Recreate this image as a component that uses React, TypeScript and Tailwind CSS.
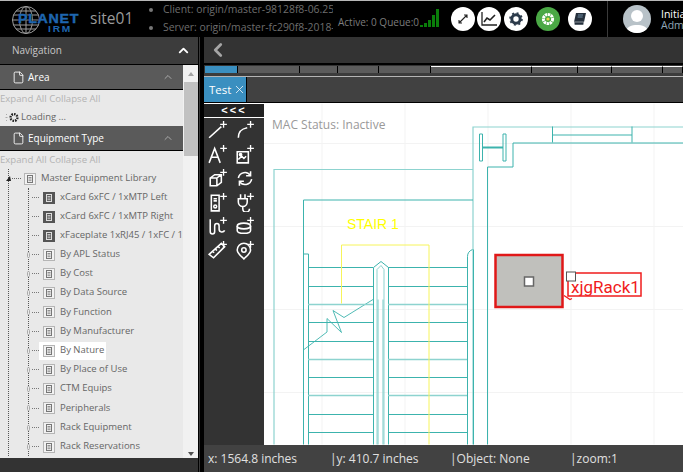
import React from "react";
import { ChevronUp, ChevronLeft, X, File } from "lucide-react";

const font = { fontFamily: '"Open Sans", sans-serif' };

function DevIcon({ dark }: { dark?: boolean }) {
  return (
    <svg width="12" height="12" viewBox="0 0 12 12" className="shrink-0">
      <rect x="0.5" y="0.5" width="11" height="11" fill={dark ? "#555" : "#f2f2f2"} stroke={dark ? "#555" : "#b5b5b5"} />
      <rect x="3.5" y="2.5" width="5" height="7" fill="none" stroke={dark ? "#ddd" : "#777"} />
      <path d="M4.5 4.5h3M4.5 6h3M4.5 7.7h3" stroke={dark ? "#ddd" : "#777"} strokeWidth="0.8" />
    </svg>
  );
}

const kids: { t: string; dark?: boolean; sel?: boolean; h?: string }[] = [
  { t: "xCard 6xFC / 1xMTP Left", dark: true },
  { t: "xCard 6xFC / 1xMTP Right", dark: true },
  { t: "xFaceplate 1xRJ45 / 1xFC / 1xMTP", dark: true },
  { t: "By APL Status" },
  { t: "By Cost" },
  { t: "By Data Source" },
  { t: "By Function", h: "h-[20px]" },
  { t: "By Manufacturer" },
  { t: "By Nature", sel: true },
  { t: "By Place of Use" },
  { t: "CTM Equips" },
  { t: "Peripherals", h: "h-[20px]" },
  { t: "Rack Equipment" },
  { t: "Rack Reservations" },
];

function PanelHead({ label }: { label: string }) {
  return (
    <div className="h-[25px] shrink-0 bg-[#5a5a5a] border-b border-black flex items-center pl-[12px] pr-[9px] text-white text-[10px]">
      <File size={13} strokeWidth={1.6} className="text-white mr-[2px] shrink-0" />
      <span className="ml-[1px]">{label}</span>
      <ChevronUp size={12} className="ml-auto text-[#aaa]" />
    </div>
  );
}

function ExpandLine() {
  return <div className="h-[18px] text-[9.6px] leading-[18px] text-[#b3b3b3] whitespace-nowrap">Expand All Collapse All</div>;
}

function Sidebar() {
  return (
    <div className="w-[198px] shrink-0 flex flex-col bg-[#333]">
      <div className="h-[28px] shrink-0 bg-[#3c3c3c] border-b border-black flex items-center pl-[12px] pr-[7px] text-[#c8c8c8] text-[10px]">
        Navigation
        <ChevronUp size={15} strokeWidth={3} className="ml-auto text-white" />
      </div>
      <div className="h-[393px] flex bg-[#f1f1f1]">
        <div className="w-[183px] bg-[#e9e9e9] overflow-hidden">
          <PanelHead label="Area" />
          <ExpandLine />
          <div className="h-[18px] flex items-center pl-[5px] text-[9.5px] text-[#666] whitespace-nowrap">
            <svg width="15" height="11" viewBox="0 0 15 11" className="mr-[1px] shrink-0">
              <circle cx="9" cy="5.5" r="3.4" fill="none" stroke="#222" strokeWidth="2.4" strokeDasharray="1.6 1" />
              <path d="M1 2l1 1M0.5 5.5h2M1 9l1-1" stroke="#aaa" />
            </svg>
            Loading ...
          </div>
          <PanelHead label="Equipment Type" />
          <ExpandLine />
          <div className="relative pl-[8px] text-[9.5px] text-[#666] whitespace-nowrap">
            <div className="border-l border-dotted border-[#555]">
              <div className="h-[19px] flex items-center -ml-[3px]">
                <span className="shrink-0 w-0 h-0 border-l-[4px] border-l-transparent border-r-[1px] border-r-transparent border-b-[5px] border-b-[#222] mr-[1px]" />
                <span className="shrink-0 w-[9px] border-t border-dotted border-[#666] mr-[3px]" />
                <DevIcon />
                <span className="ml-[5px]">Master Equipment Library</span>
              </div>
              <div className="ml-[19px] border-l border-dotted border-[#555]">
                {kids.map((k) => (
                  <div key={k.t} className={`${k.h ?? "h-[19px]"} flex items-center`}>
                    {k.dark ? (
                      <span className="shrink-0 w-[3px]" />
                    ) : (
                      <span className="shrink-0 w-[3px] h-[6px] border border-[#aaa] rounded-full -ml-[2px] mr-[2px] bg-[#e9e9e9]" />
                    )}
                    <span className="shrink-0 w-[7px] border-t border-dotted border-[#777] mr-[4px]" />
                    <div className={`shrink-0 flex items-center h-[18px] -ml-[4px] pl-[4px] pr-[2px] ${k.sel ? "bg-white" : ""}`}>
                      <DevIcon dark={k.dark} />
                      <span className="ml-[5px]">{k.t}</span>
                    </div>
                  </div>
                ))}
              </div>
            </div>
          </div>
        </div>
        <div className="w-[15px] flex flex-col items-center bg-[#f1f1f1] relative">
          <span className="mt-[7px] w-0 h-0 border-x-[3.5px] border-x-transparent border-b-[4px] border-b-[#a3a3a3]" />
          <div className="w-[14px] h-[74px] bg-[#c1c1c1] mt-[6px]" />
          <span className="mt-auto mb-[2px] w-0 h-0 border-x-[3.5px] border-x-transparent border-t-[4px] border-t-[#505050]" />
        </div>
      </div>
    </div>
  );
}

function Circle({ children, green }: { children: React.ReactNode; green?: boolean }) {
  return (
    <div className={`w-[24px] h-[24px] rounded-full flex items-center justify-center shrink-0 ${green ? "bg-[#4aa845]" : "bg-white"}`}>
      {children}
    </div>
  );
}

function Header() {
  return (
    <div className="h-[37px] shrink-0 bg-black border-t border-[#b8b8b8] flex items-stretch overflow-hidden">
      <div className="w-[86px] shrink-0 relative">
        <svg width="32" height="32" viewBox="0 0 32 32" className="absolute left-[10px] top-[3px]" fill="none" stroke="#9c9c9c" strokeWidth="1">
          <circle cx="16" cy="16" r="13.5" />
          <ellipse cx="16" cy="16" rx="6.5" ry="13.5" />
          <path d="M16 2.5v27M3.5 11h25M2.5 16h27M3.5 21h25M6 7h20M6 25h20" />
        </svg>
        <div className="absolute left-[18px] top-[12px] text-[#1e66b0] text-[12.5px] leading-[13px] font-bold tracking-[0.6px] scale-x-[1.14] origin-left [text-shadow:0_0_2px_#000] [-webkit-text-stroke:0.4px_#1e66b0]" style={{ fontFamily: '"Liberation Sans", sans-serif' }}>PLANET</div>
        <div className="absolute left-[48px] top-[24px] text-[#1e66b0] text-[8.5px] leading-[9px] font-bold tracking-[1.5px] scale-x-[1.2] origin-left" style={{ fontFamily: '"Liberation Sans", sans-serif' }}>IRM</div>
      </div>
      <div className="w-[60px] pl-[4px] shrink-0 text-[#9a9a9a] text-[15.5px] leading-[35px]">site01</div>
      <div className="w-[187px] shrink-0 overflow-hidden text-[10.4px] text-[#6e6e6e] pl-[3px] whitespace-nowrap">
        <div className="flex items-center h-[18px]"><span className="shrink-0 w-[4px] h-[4px] rounded-full bg-[#777] mr-[10px]" />Client: origin/master-98128f8-06.25-1</div>
        <div className="flex items-center h-[18px]"><span className="shrink-0 w-[4px] h-[4px] rounded-full bg-[#777] mr-[10px]" />Server: origin/master-fc290f8-2018-06</div>
      </div>
      <div className="w-[87px] shrink-0 pl-[5px] text-[10px] text-[#7d7d7d] leading-[43px] whitespace-nowrap">Active: 0 Queue:0</div>
      <div className="w-[31px] shrink-0 flex items-end gap-[1px] pb-[10px]">
        <span className="w-[3px] h-[2px] bg-[#0a7d0a]" />
        <span className="w-[3px] h-[4px] bg-[#0a7d0a]" />
        <span className="w-[3px] h-[7px] bg-[#0a7d0a]" />
        <span className="w-[3px] h-[12px] bg-[#0a7d0a]" />
        <span className="w-[3px] h-[18px] bg-[#0a7d0a]" />
      </div>
      <div className="w-[156px] shrink-0 flex items-center">
        <div className="mr-[2px]">
          <Circle>
            <svg width="12" height="12" viewBox="0 0 12 12" fill="none" stroke="#222" strokeWidth="1.1"><path d="M2 10l8-8M2 7v3h3M7 2h3v3" /></svg>
          </Circle>
        </div>
        <div className="mr-[3px]">
          <Circle>
            <svg width="16" height="14" viewBox="0 0 16 14" fill="none" stroke="#222" strokeWidth="1.3"><path d="M1 0v13h15" /><path d="M3 10l3-4 3 2 5-5" strokeWidth="1.6" /></svg>
          </Circle>
        </div>
        <div className="mr-[8px]">
          <Circle>
            <svg width="14" height="14" viewBox="0 0 14 14"><circle cx="7" cy="7" r="4.2" fill="none" stroke="#2b3a4a" strokeWidth="3" /><circle cx="7" cy="7" r="6" fill="none" stroke="#2b3a4a" strokeWidth="1.6" strokeDasharray="2 2.7" /></svg>
          </Circle>
        </div>
        <div className="mr-[8px]">
          <Circle green>
            <svg width="14" height="14" viewBox="0 0 14 14"><circle cx="7" cy="7" r="4.6" fill="none" stroke="#fff" strokeWidth="3" strokeDasharray="2.4 0.6" /><circle cx="7" cy="7" r="1.6" fill="#e6d84a" /></svg>
          </Circle>
        </div>
        <Circle>
          <svg width="14" height="14" viewBox="0 0 14 14"><path d="M3 1h10l-2 9H1z" fill="#25303c" /><path d="M1 10h10l-.5 3H1.5z" fill="#25303c" stroke="#fff" strokeWidth="0.5" /><path d="M5 3h5M4.6 5h5" stroke="#6f8aa0" /></svg>
        </Circle>
      </div>
      <div className="w-[76px] shrink-0 border-l border-[#3a3a3a] flex items-center pl-[15px]">
        <div className="w-[28px] h-[28px] rounded-full bg-[#b8c2c8] overflow-hidden shrink-0">
          <svg width="28" height="28" viewBox="0 0 28 28"><circle cx="14" cy="11" r="6" fill="#fff" /><path d="M3 28c0-7 6-8 11-8s11 1 11 8z" fill="#fff" /></svg>
        </div>
        <div className="ml-[10px] text-[10.5px] leading-[10px] whitespace-nowrap">
          <div className="text-white">Initial</div>
          <div className="text-[#8fa6b8] mt-[1px]">Admin</div>
        </div>
      </div>
    </div>
  );
}

const plus = "M14 1v6M11 4h6";
const tools: React.ReactNode[] = [
  <path d="M1 16L12 6" />,
  <path d="M3 16c0-6 3-8 8-9" />,
  <>
    <path d="M1 17l5-13 5 13M3 12h6" />
  </>,
  <>
    <path d="M2 7h10v10H2zM3 14l3-3 2 2 2-2" />
    <circle cx="5" cy="9.5" r="1" fill="#fff" />
  </>,
  <path d="M2 9l4-3h6v7l-4 3H2zM2 9h6v7M8 9l4-3" />,
  <>
    <path d="M3 9a6 6 0 0 1 11-2M15 10a6 6 0 0 1-11 2" />
    <path d="M14 3v4h-4M4 16v-4h4" />
  </>,
  <>
    <path d="M3 3h7v14H3zM5 6h3M5 8h3" />
    <circle cx="6.5" cy="13" r="1.3" />
  </>,
  <path d="M3 6h8v3a4 4 0 0 1-8 0zM5 6V2M9 6V2M7 13v2a3 3 0 0 0 6 0" />,
  <path d="M2 3v11c0 3 4 3 4 0V9c0-3 4-3 4 0v3c0 3 4 3 5 1" />,
  <>
    <ellipse cx="8" cy="9" rx="6" ry="2.6" />
    <path d="M2 9v4c0 3.4 12 3.4 12 0V9" />
  </>,
  <path d="M1 13L12 3l3 3L5 16zM4 10l1.5 1.5M6.5 8L8 9.500M9 5.700l1.500 1.500" />,
  <>
    <path d="M8 17c-3-3-6-5-6-8a6 6 0 0 1 12 0c0 3-3 5-6 8z" />
    <circle cx="8" cy="9" r="2" />
  </>,
];

function Tools() {
  return (
    <div className="w-[60px] shrink-0 bg-[#333] flex flex-col">
      <div className="h-[15px] shrink-0 bg-[#222] border-y border-white flex items-center justify-center text-white text-[11px] font-bold tracking-[2px]" style={{ fontFamily: '"Liberation Sans", sans-serif' }}>
        &lt;&lt;&lt;
      </div>
      <div className="grid grid-cols-2 pr-[6px] auto-rows-[24px] place-items-center">
        {tools.map((t, i) => (
          <svg key={i} width="20" height="20" viewBox="0 0 18 18" fill="none" stroke="#fff" strokeWidth="1.4">
            {t}
            {i !== 5 && <path d={plus} strokeWidth="1.2" />}
          </svg>
        ))}
      </div>
    </div>
  );
}

function Plan() {
  const t = "#3cb3ad";
  const l = "#8dd3cf";
  const treads: [number, boolean][] = [[268, false], [287, false], [305, true], [323, false], [342, false], [360, true], [378, false], [396, true], [415, false], [433, false]];
  return (
    <svg viewBox="264 104 419 341" className="absolute inset-0 w-full h-full" fill="none">
      <g stroke="#f3f3f3">
        {[322, 405, 488, 571, 654].map((x) => <path key={x} d={`M${x} 104V445`} />)}
        {[144, 227, 310, 393].map((y) => <path key={y} d={`M264 ${y}H683`} />)}
      </g>
      <g stroke={l} strokeWidth="1.2">
        <path d="M274 445V170H473" />
        <path d="M473 445V127.500H683" />
        <path d="M378 300V445M383 300V445" />
      </g>
      <g stroke={t}>
        <path d="M303.500 445V200.500H473" />
        <path d="M487.500 445V167.500H513V143.500H683" />
        <path d="M552.500 127V143M632 127V143M552.500 135.500H632" />
        <path d="M308.500 445V254.500H303.500" />
        <path d="M467.500 445V257q0-5 5-7" />
        <path d="M473.500 445V250" />
        <path d="M479.500 134.500h3v27h-3zM503 134.500h3v27h-3z" stroke={t} />
        <path d="M482.500 148H503" strokeWidth="2" />
        <path d="M373.500 445V268L381 262L388.500 268V445" />
        <path d="M377 445V270L381 266L384 270V445" stroke={l} />
        <path d="M304 350L327 332.500V319L341.500 333L333 311L344 318L373 300" strokeWidth="0.9" />
        {treads.map(([y, light]) => (
          <g key={y} stroke={light ? l : t} strokeWidth={light ? 1.4 : 1}>
            <path d={`M308 ${y}H373M388 ${y}H467`} />
          </g>
        ))}
      </g>
      <path d="M341.500 304V245.500H429V445" stroke="#f6f45a" />
      <text x="347" y="229" fill="#ffff00" fontSize="14" style={{ fontFamily: '"Liberation Sans", sans-serif' }}>STAIR 1</text>
      <rect x="495.500" y="255.500" width="67" height="52" fill="#c0c0bc" stroke="#e01818" strokeWidth="2.500" />
      <rect x="524.500" y="277.500" width="9" height="9" fill="#fff" stroke="#666" strokeWidth="1.500" />
      <rect x="568" y="273.500" width="73" height="23" fill="#fff" stroke="#f01c1c" strokeWidth="1.500" />
      <path d="M564 296l6 4 2-1" stroke="#f01c1c" strokeWidth="1.300" />
      <rect x="566.500" y="272.500" width="9" height="9" fill="#fff" stroke="#555" />
      <text x="571" y="293" fill="#f01c1c" fontSize="17" style={{ fontFamily: 'Roboto, sans-serif' }}>xjgRack1</text>
    </svg>
  );
}

function Main() {
  const cells = [
    { w: 33, c: "bg-[#3a8fc0]" },
    { w: 62 }, { w: 38 }, { w: 41 }, { w: 52 },
    { w: 101, top: true }, { w: 46, top: true }, { w: 34, top: true }, { w: 51, top: true }, { w: 20, top: true },
  ];
  return (
    <div className="flex-1 min-w-0 flex flex-col">
      <div className="h-[26px] shrink-0 bg-[#333] flex items-center pl-[3px]">
        <ChevronLeft size={22} strokeWidth={3} className="text-[#a5a5a5]" />
      </div>
      <div className="h-[2px] shrink-0 bg-black" />
      <div className="h-[8px] shrink-0 bg-[#333] pt-[1px] pl-[1px] flex overflow-hidden">
        {cells.map((c, i) => (
          <div
            key={i}
            style={{ width: c.w }}
            className={`h-[7px] shrink-0 border-r border-black ${c.c ?? "bg-[#5c5c5c]"} ${c.top ? "border-t border-t-white" : ""}`}
          />
        ))}
      </div>
      <div className="h-[3px] shrink-0 bg-[#3c3c3c]" />
      <div className="h-[1px] shrink-0 bg-[#b5b5b5]" />
      <div className="h-[26px] shrink-0 bg-[#414141] border-b border-black flex">
        <div className="w-[43px] h-[25px] bg-[#3a8fc0] border-r border-black flex items-center pl-[5px] text-white text-[11.5px]">
          Test
          <X size={13} strokeWidth={1.4} className="ml-[2px] shrink-0" />
        </div>
      </div>
      <div className="flex-1 min-h-0 flex">
        <Tools />
        <div className="flex-1 relative bg-white overflow-hidden">
          <Plan />
          <div className="absolute left-[8px] top-[15px] text-[12px] leading-[14px] text-[#999]">MAC Status: Inactive</div>
        </div>
      </div>
      <div className="h-[27px] shrink-0 bg-[#424242] text-[12px] text-[#e0e0e0] pl-[4px] overflow-hidden whitespace-nowrap">
        <div className="flex h-[25px] items-center pt-[2px]">
          <span className="w-[122px]">x: 1564.8 inches</span>
          <span className="w-[120px]">|y: 410.7 inches</span>
          <span className="w-[120px]">|Object: None</span>
          <span>|zoom:1</span>
        </div>
        <div className="pl-[1px] leading-[14px]">H: 00000/00 0.105</div>
      </div>
    </div>
  );
}

export default function App() {
  return (
    <div className="w-[683px] h-[472px] overflow-hidden flex flex-col bg-black" style={font}>
      <Header />
      <div className="flex-1 min-h-0 flex">
        <div className="flex flex-col">
          <Sidebar />
          <div className="flex-1 w-[198px] bg-[#333]" />
        </div>
        <div className="w-[6px] shrink-0 bg-black flex">
          <div className="w-[1px] ml-[1px] bg-[#3a3a3a]" />
        </div>
        <Main />
      </div>
    </div>
  );
}
